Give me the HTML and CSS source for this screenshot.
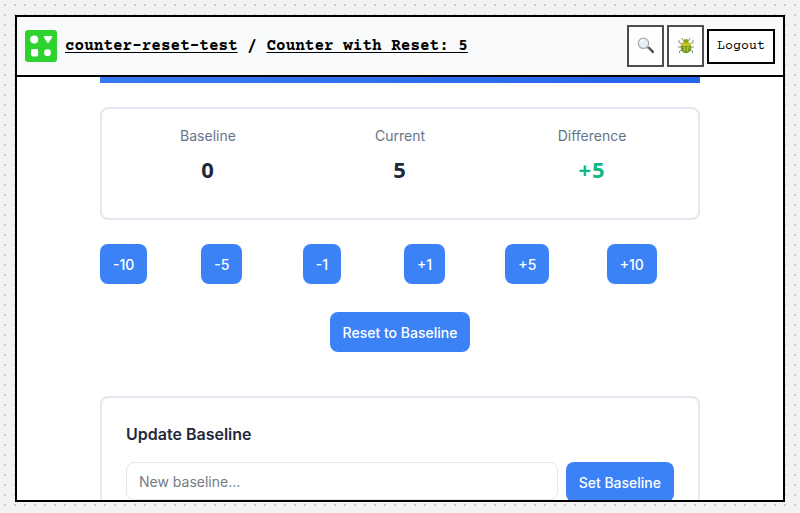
FILE: index.html
```html
<!DOCTYPE html>
<html lang="en">
<head>
<meta charset="utf-8">
<title>Counter with Reset</title>
<link rel="stylesheet" href="styles.css">
</head>
<body>
<div class="frame">
  <header class="topbar">
    <svg class="logo" viewBox="0 0 32 32"><rect width="32" height="32" rx="3" fill="#2fd32f"/><g fill="#fff"><circle cx="9.2" cy="9.5" r="4"/><path d="M19.5 6h7q1.2.3.6 1.6l-3.3 5q-.8 1-1.6 0l-3.3-5q-.6-1.3.6-1.6z"/><rect x="6" y="19" width="7.2" height="7.4" rx="1.8"/><circle cx="22.5" cy="22.7" r="3.4"/></g></svg>
    <nav class="crumbs"><a href="#">counter-reset-test</a> <span>/</span> <a href="#">Counter with Reset: 5</a></nav>
    <div class="tools">
      <button class="tool" aria-label="Search"><svg width="18" height="18" viewBox="0 0 18 18"><path d="M10.3 10.7l1.6-1.4 5 4.6q.5 2-1.3 2.5z" fill="#505255"/><path d="M9.8 9.8l2 1.8" stroke="#777" stroke-width="1.5"/><circle cx="6.5" cy="6.3" r="5.2" fill="#e5eef5" stroke="#a4a9ad" stroke-width="1.2"/><path d="M3.3 6q.5-2.6 3-2.8" fill="none" stroke="#fff" stroke-width="1.2"/></svg></button>
      <button class="tool" aria-label="Debug"><svg width="18" height="18" viewBox="0 0 18 18"><g fill="none" stroke="#899078"><path d="M6.5 4L5 1M11.5 4L13 1M5 7L2 5.5V3M13 7l3-1.500V3M4 10H1M14 10h3M5 13l-2.500 1V16M13 13l2.500 1V16"/></g><ellipse cx="9" cy="10.500" rx="5.300" ry="5.800" fill="#759d26"/><path d="M4.300 8.500Q5 4 9 4t4.700 4.500Q9 10 4.300 8.500z" fill="#c9c221"/><ellipse cx="9" cy="4" rx="2.500" ry="2" fill="#8a9f28"/><path d="M6 9.500q3 1 6 0l-1.500 5H7.500z" fill="#b4c92c"/><path d="M9 9v7" stroke="#527c22"/></svg></button>
      <button class="logout">Logout</button>
    </div>
  </header>
  <main class="content">
    <div class="banner"></div>
    <section class="card stats">
      <div class="stat"><span class="label">Baseline</span><strong class="value">0</strong></div>
      <div class="stat"><span class="label">Current</span><strong class="value">5</strong></div>
      <div class="stat"><span class="label">Difference</span><strong class="value positive">+5</strong></div>
    </section>
    <div class="steps">
      <div><button class="btn">-10</button></div>
      <div><button class="btn">-5</button></div>
      <div><button class="btn">-1</button></div>
      <div><button class="btn">+1</button></div>
      <div><button class="btn">+5</button></div>
      <div><button class="btn">+10</button></div>
    </div>
    <div class="reset"><button class="btn">Reset to Baseline</button></div>
    <section class="card update">
      <h3>Update Baseline</h3>
      <div class="row"><input type="text" placeholder="New baseline..."><button class="btn">Set Baseline</button></div>
    </section>
  </main>
</div>
</body>
</html>
```
FILE: styles.css
```css
* { box-sizing: border-box; }
body {
  margin: 0;
  height: 513px;
  padding: 15px 15px 11px;
  overflow: hidden;
  background: #f2f2f2 conic-gradient(from 90deg at 8px 8px, #ccc 25%, transparent 0) -4px -4px / 10px 10px;
  font-family: Inter, "Liberation Sans", sans-serif;
}
button { font: inherit; margin: 0; }
.frame {
  height: 487px;
  border: 2px solid #000;
  background: #fff;
  overflow: hidden;
}
.topbar {
  display: flex;
  align-items: center;
  height: 60px;
  padding: 0 8px;
  border-bottom: 2px solid #000;
  background: #f8fafc;
}
.logo { width: 32px; height: 32px; margin-right: 8px; }
.crumbs {
  flex: 1;
  font: bold 16px "Courier Prime", "Liberation Mono", monospace;
  color: #000;
}
.crumbs a { color: inherit; text-underline-offset: 2px; text-decoration-thickness: 1px; }
.tools { display: flex; align-items: center; gap: 3px; }
.tool {
  display: grid;
  place-items: center;
  width: 37px;
  height: 42px;
  padding: 0;
  border: 2px solid #4d4d4d;
  background: #fdfdfe;
}
.logout {
  width: 68px;
  height: 35px;
  padding: 0;
  border: 2px solid #000;
  background: #fff;
  color: #000;
  font: 13.333px "Courier Prime", "Liberation Mono", monospace;
}
.content { width: 600px; margin: 0 auto; }
.banner { height: 6px; background: linear-gradient(90deg, #3679f3, #2563eb); }
.card { border: 2px solid #e2e8f0; border-radius: 8px; }
.stats {
  display: grid;
  grid-template-columns: repeat(3, 1fr);
  height: 113px;
  margin-top: 24px;
  padding: 16px 10px;
}
.stat { display: flex; flex-direction: column; align-items: center; }
.label { font-size: 14px; line-height: 22px; color: #64748b; }
.value { margin-top: 4px; font: bold 22px/36px "Noto Sans", sans-serif; letter-spacing: 1px; color: #1e293b; }
.positive { color: #10b981; }
.steps {
  display: grid;
  grid-template-columns: repeat(6, 1fr);
  column-gap: 8px;
  margin-top: 24px;
}
.btn {
  display: block;
  height: 40px;
  padding: 0 13px;
  border: 0;
  border-radius: 8px;
  background: #3b82f6;
  color: #fff;
  font-size: 14px;
  font-weight: 500;
  white-space: nowrap;
}
.reset { display: flex; justify-content: center; margin-top: 28px; }
.update { margin-top: 44px; padding: 24px; height: 150px; }
.update h3 { margin: 0 0 16px; font-size: 16px; font-weight: 600; line-height: 24px; color: #1e293b; }
.row { display: flex; gap: 8px; }
.row input {
  flex: 1;
  min-width: 0;
  height: 38px;
  padding: 0 12px;
  border: 1px solid #e5e7eb;
  border-radius: 8px;
  background: #fff;
  font: 14px Inter, sans-serif;
}
.row input::placeholder { color: #757b87; }
```
